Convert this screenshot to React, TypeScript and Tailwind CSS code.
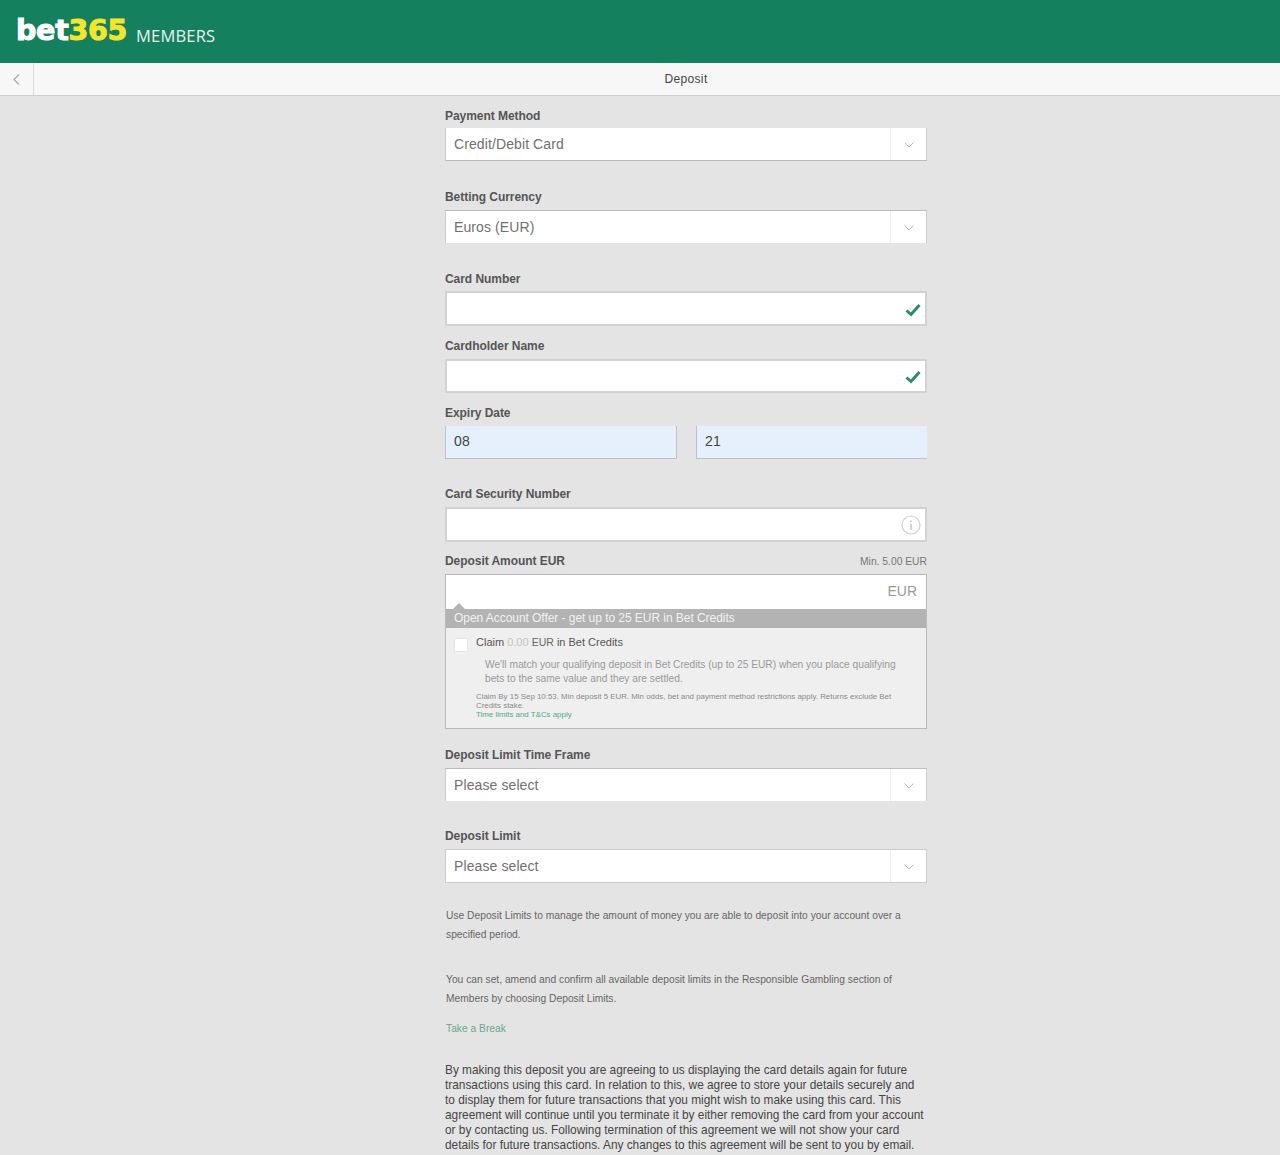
import React from 'react';

const Chevron = () => (
    <svg width="10" height="6" viewBox="0 0 10 6" fill="none" stroke="#b9b9b9" strokeWidth="1"><path d="M0.5 0.5 L5 5 L9.5 0.5" /></svg>
);

const Check = () => (
    <svg width="16" height="14" viewBox="0 0 16 14" fill="none" stroke="#2d8b6d" strokeWidth="3"><path d="M1.5 7.5 L6 11.5 L14.5 2" /></svg>
);

const Info = () => (
    <svg width="20" height="20" viewBox="0 0 20 20" fill="none" stroke="#d0d0d0">
        <circle cx="10" cy="10" r="9" strokeWidth="1.2" />
        <path d="M10 9 V15" strokeWidth="1.8" />
        <path d="M10 5.5 V7" strokeWidth="1.8" />
    </svg>
);

const Label: React.FC<{ text: string; className?: string }> = ({ text, className = 'mb-1' }) => (
    <div className={`h-4 text-[12px] leading-4 font-bold tracking-[-0.05px] text-[#555] ${className}`}>{text}</div>
);

const SelectBox: React.FC<{ value: string; h?: string; border?: string }> = ({ value, h = 'h-[33px]', border = 'border-x border-b border-x-[#ccc] border-b-[#bbb]' }) => (
    <div className={`flex items-stretch bg-white ${h} ${border}`}>
        <div className="flex-1 pl-2 text-[14px] leading-[33px] tracking-[0.1px] text-[#707070]">{value}</div>
        <div className="w-[36px] border-l border-[#eee] flex items-center justify-center pt-0.5"><Chevron /></div>
    </div>
);

const TextBox: React.FC<{ h: string; icon?: React.ReactNode; className?: string }> = ({ h, icon, className = 'pt-0.5' }) => (
    <div className={`flex items-center justify-end pr-1 bg-white border-2 border-[#d2d2d2] ${h} ${className}`}>{icon}</div>
);

const App: React.FC = () => {
    return (
        <div className="h-[1155px] overflow-hidden bg-[#e4e4e4] font-['Liberation_Sans',Arial,sans-serif]">
            <header className="h-[63px] bg-[#14805e] flex items-start pl-[16px]">
                <span className="mt-[11px] text-[28.5px] leading-10 font-black tracking-[-0.3px] font-['DejaVu_Sans',sans-serif] text-white [-webkit-text-stroke:1px_currentColor] w-[120px] whitespace-nowrap">
                    bet<span className="text-[#f5e52c]">365</span>
                </span>
                <span className="mt-[24px] text-[16.5px] leading-6 tracking-[0.2px] text-[#e8f3ee] font-['Open_Sans',sans-serif]">MEMBERS</span>
            </header>

            <div className="h-[33px] bg-[#f7f7f7] border-b border-[#cfcfcf] flex">
                <div className="w-[34px] border-r border-[#d8d8d8] flex items-center justify-center">
                    <svg width="7" height="11" viewBox="0 0 7 11" fill="none" stroke="#aaa" strokeWidth="1.2"><path d="M6 0.5 L1 5.5 L6 10.5" /></svg>
                </div>
                <div className="flex-1 pl-[58px] text-center text-[12px] tracking-[0.35px] leading-8 text-[#444]">Deposit</div>
            </div>

            <main className="ml-[445px] w-[482px] pt-3">
                <Label text="Payment Method" />
                <SelectBox value="Credit/Debit Card" />

                <Label text="Betting Currency" className="mt-7 mb-[5px]" />
                <SelectBox value="Euros (EUR)" border="border-x border-t border-x-[#ccc] border-t-[#bbb]" />

                <Label text="Card Number" className="mt-7 mb-1" />
                <TextBox h="h-[35px]" icon={<Check />} />

                <Label text="Cardholder Name" className="mt-3 mb-[5px]" />
                <TextBox h="h-[34px]" icon={<Check />} />

                <Label text="Expiry Date" className="mt-3 mb-[5px]" />
                <div className="flex gap-[19px]">
                    <div className="w-[232px] h-[33px] pl-2 bg-[#e6effc] border-l border-r border-b border-[#bcc2ca] text-[14px] leading-[31px] tracking-[0.3px] text-[#444]">08</div>
                    <div className="w-[231px] h-[33px] pl-2 bg-[#e6effc] border-l border-b border-[#bcc2ca] text-[14px] leading-[31px] tracking-[0.3px] text-[#444]">21</div>
                </div>

                <Label text="Card Security Number" className="mt-[27px] mb-[5px]" />
                <TextBox h="h-[35px]" icon={<Info />} className="pt-0" />

                <div className="mt-[11px] mb-[5px] h-4 flex items-center justify-between">
                    <span className="text-[12px] font-bold tracking-[-0.05px] text-[#555]">Deposit Amount EUR</span>
                    <span className="pt-0.5 text-[10.3px] text-[#777]">Min. 5.00 EUR</span>
                </div>
                <div className="border border-[#b9b9b9] bg-[#efefef] h-[155px]">
                    <div className="relative h-[34px] bg-white pr-[9px] text-right text-[14px] leading-[32px] text-[#999]">
                        EUR
                        <span className="absolute left-[7px] bottom-0 border-x-[6px] border-b-[6px] border-x-transparent border-b-[#b3b3b3]"></span>
                    </div>
                    <div className="h-[19px] bg-[#b3b3b3] pl-2 text-[12px] tracking-[-0.05px] leading-[19px] text-[#f2f2f2]">Open Account Offer - get up to 25 EUR in Bet Credits</div>
                    <div className="flex pl-2 pt-[7px]">
                        <div className="w-[14px] h-[14px] mt-[3px] bg-white shrink-0 border border-[#e6e6e6]"></div>
                        <div className="pl-2 text-[11px] leading-[14px] text-[#555]">Claim <span className="text-[#c4c4c4]">0.00</span> <span className="text-[10.5px] text-[#666]">EUR</span> in Bet Credits</div>
                    </div>
                    <div className="mt-[6px] pl-[39px] pr-[20px] text-[10.2px] leading-[14px] text-[#999]">We'll match your qualifying deposit in Bet Credits (up to 25 EUR) when you place qualifying bets to the same value and they are settled.</div>
                    <div className="mt-[6px] pl-[30px] pr-[30px] text-[7.9px] leading-[9px] text-[#8a8a8a]">
                        Claim By 15 Sep 10:53. Min deposit 5 EUR. Min odds, bet and payment method restrictions apply. Returns exclude Bet Credits stake.
                        <div className="text-[#53a888]">Time limits and T&amp;Cs apply</div>
                    </div>
                </div>

                <Label text="Deposit Limit Time Frame" className="mt-[18px] mb-[5px]" />
                <SelectBox value="Please select" border="border-x border-t border-x-[#ccc] border-t-[#bbb]" />

                <Label text="Deposit Limit" className="mt-[27px] mb-[5px]" />
                <SelectBox value="Please select" h="h-[34px]" border="border border-[#ccc]" />

                <div className="mt-[23px] pl-px pr-[20px] text-[10.25px] leading-[19px] text-[#666]">
                    <p>Use Deposit Limits to manage the amount of money you are able to deposit into your account over a specified period.</p>
                    <p className="mt-[26px]">You can set, amend and confirm all available deposit limits in the Responsible Gambling section of Members by choosing Deposit Limits.</p>
                    <p className="mt-[11px] text-[#6fa58e]">Take a Break</p>
                </div>
                <p className="mt-[25px] text-[11.85px] leading-[15px] text-[#444]">
                    By making this deposit you are agreeing to us displaying the card details again for future transactions using this card. In relation to this, we agree to store your details securely and to display them for future transactions that you might wish to make using this card. This agreement will continue until you terminate it by either removing the card from your account or by contacting us. Following termination of this agreement we will not show your card details for future transactions. Any changes to this agreement will be sent to you by email.
                </p>
            </main>
        </div>
    );
};

export default App;
